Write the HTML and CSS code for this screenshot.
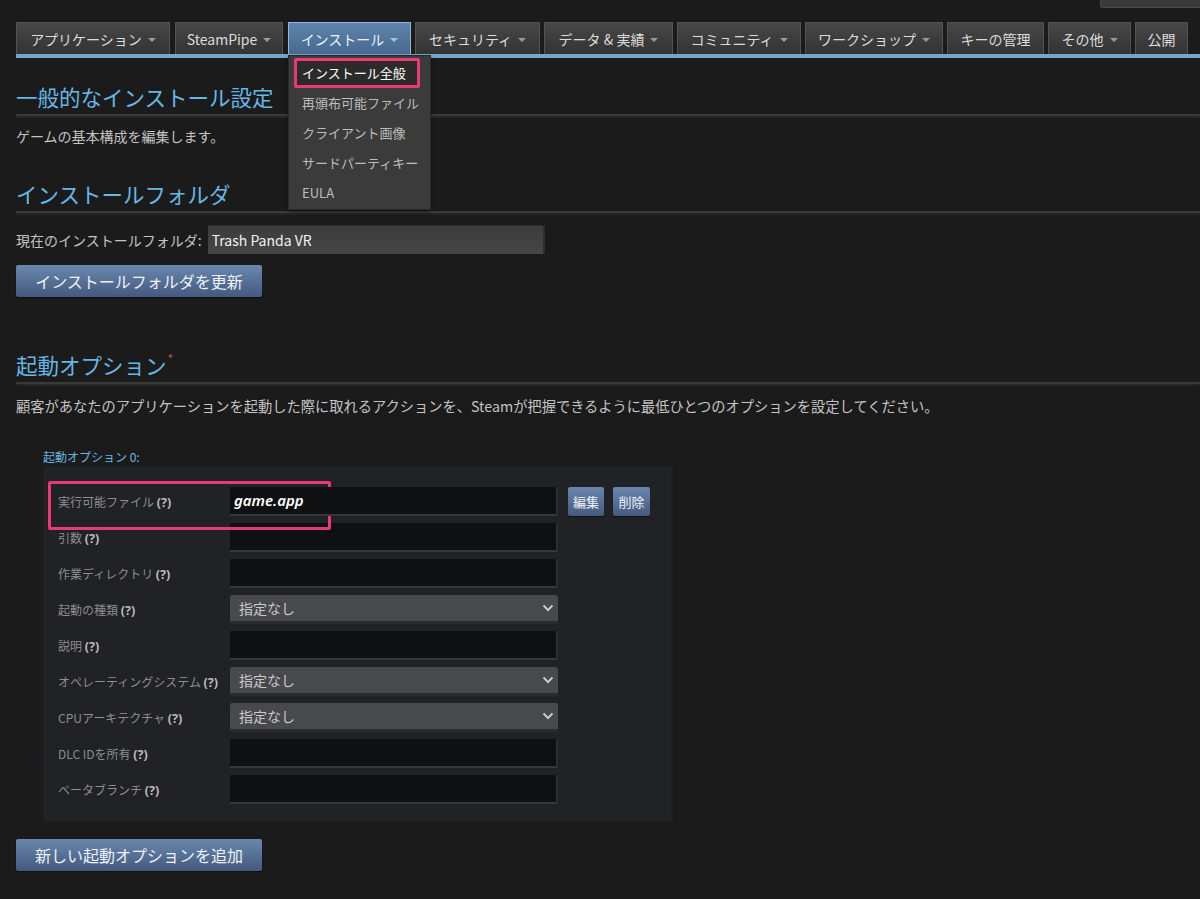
FILE: index.html
```html
<!DOCTYPE html>
<html lang="ja">
<head>
<meta charset="utf-8">
<title>インストール全般</title>
<link rel="stylesheet" href="styles.css">
</head>
<body>
<div class="topbar"><div class="topbox"></div></div>
<nav class="nav">
  <div class="tab">アプリケーション<span class="caret"></span></div>
  <div class="tab">SteamPipe<span class="caret"></span></div>
  <div class="tab active">インストール<span class="caret"></span>
    <div class="menu">
      <div class="menu-item current">インストール全般</div>
      <div class="menu-item">再頒布可能ファイル</div>
      <div class="menu-item">クライアント画像</div>
      <div class="menu-item">サードパーティキー</div>
      <div class="menu-item">EULA</div>
    </div>
  </div>
  <div class="tab">セキュリティ<span class="caret"></span></div>
  <div class="tab">データ &amp; 実績<span class="caret"></span></div>
  <div class="tab">コミュニティ<span class="caret"></span></div>
  <div class="tab">ワークショップ<span class="caret"></span></div>
  <div class="tab">キーの管理</div>
  <div class="tab">その他<span class="caret"></span></div>
  <div class="tab">公開</div>
</nav>

<main class="content">
  <h2 class="heading first">一般的なインストール設定</h2>
  <p class="text">ゲームの基本構成を編集します。</p>

  <h2 class="heading second">インストールフォルダ</h2>
  <div class="folder-row">
    <span class="text">現在のインストールフォルダ:</span>
    <div class="folder-input">Trash Panda VR</div>
  </div>
  <div class="btn big">インストールフォルダを更新</div>

  <h2 class="heading launch">起動オプション<sup class="req">*</sup></h2>
  <p class="text desc">顧客があなたのアプリケーションを起動した際に取れるアクションを、Steamが把握できるように最低ひとつのオプションを設定してください。</p>

  <div class="opt-title">起動オプション 0:</div>
  <section class="panel">
    <div class="highlight"></div>
    <div class="row">
      <span class="label">実行可能ファイル <b>(?)</b></span>
      <div class="field exec">game.app</div>
      <div class="btn small">編集</div>
      <div class="btn small">削除</div>
    </div>
    <div class="row"><span class="label">引数 <b>(?)</b></span><div class="field"></div></div>
    <div class="row"><span class="label">作業ディレクトリ <b>(?)</b></span><div class="field"></div></div>
    <div class="row"><span class="label">起動の種類 <b>(?)</b></span>
      <div class="select"><span>指定なし</span><svg width="12" height="8" viewBox="0 0 12 8"><path d="M1.5 1.5 L6 6 L10.5 1.5" fill="none" stroke="#c8c8c8" stroke-width="2"/></svg></div></div>
    <div class="row"><span class="label">説明 <b>(?)</b></span><div class="field"></div></div>
    <div class="row"><span class="label">オペレーティングシステム <b>(?)</b></span>
      <div class="select"><span>指定なし</span><svg width="12" height="8" viewBox="0 0 12 8"><path d="M1.5 1.5 L6 6 L10.5 1.5" fill="none" stroke="#c8c8c8" stroke-width="2"/></svg></div></div>
    <div class="row"><span class="label">CPUアーキテクチャ <b>(?)</b></span>
      <div class="select"><span>指定なし</span><svg width="12" height="8" viewBox="0 0 12 8"><path d="M1.5 1.5 L6 6 L10.5 1.5" fill="none" stroke="#c8c8c8" stroke-width="2"/></svg></div></div>
    <div class="row"><span class="label">DLC IDを所有 <b>(?)</b></span><div class="field"></div></div>
    <div class="row"><span class="label">ベータブランチ <b>(?)</b></span><div class="field"></div></div>
  </section>

  <div class="btn big add">新しい起動オプションを追加</div>
</main>
</body>
</html>
```

FILE: styles.css
```css
* { box-sizing: border-box; }
body {
  margin: 0;
  background: #1b1b1b;
  font-family: "Noto Sans CJK JP", "Noto Sans", sans-serif;
  color: #c6c6c6;
  min-height: 899px;
}
.topbar {
  height: 8px;
  display: flex;
  justify-content: flex-end;
}
.topbox {
  width: 100px;
  height: 8px;
  background: #3a3a3a;
  border-left: 1px solid #4a4a4a;
  border-bottom: 1px solid #4a4a4a;
  border-radius: 0 0 0 3px;
}
.nav {
  margin: 14px 0 0 16px;
  display: flex;
  gap: 4px;
  border-bottom: 4px solid #76a3cf;
}
.tab {
  position: relative;
  flex: none;
  height: 32px;
  display: flex;
  align-items: center;
  justify-content: center;
  font-size: 14px;
  color: #dcdcdc;
  background: linear-gradient(#474747, #333333);
  border: 1px solid #535353;
  border-bottom: none;
  white-space: nowrap;
}
.tab:nth-child(1) { width: 154px; }
.tab:nth-child(2) { width: 108px; margin-left: 1px; }
.tab:nth-child(3) { width: 123px; margin-left: 1px; }
.tab:nth-child(4) { width: 125px; }
.tab:nth-child(5) { width: 129px; }
.tab:nth-child(6) { width: 124px; }
.tab:nth-child(7) { width: 138px; }
.tab:nth-child(8) { width: 97px; }
.tab:nth-child(9) { width: 83px; }
.tab:nth-child(10) { width: 53px; }
.tab.active {
  background: linear-gradient(#5e83aa, #47698f);
  border-color: #90b8de;
  color: #eef3f8;
}
.caret {
  display: inline-block;
  margin-left: 6px;
  margin-top: 2px;
  width: 0;
  height: 0;
  border-left: 4px solid transparent;
  border-right: 4px solid transparent;
  border-top: 4px solid #9a9a9a;
}
.tab.active .caret { border-top-color: #a9c0d8; }
.menu {
  position: absolute;
  top: 32px;
  left: -1px;
  width: 143px;
  background: #3b3b3b;
  border: 1px solid #2a2a2a;
  padding: 2px 0 1px;
  z-index: 10;
  box-shadow: 0 2px 4px rgba(0,0,0,0.4);
}
.menu-item {
  height: 30px;
  line-height: 30px;
  padding-left: 13px;
  font-size: 13px;
  color: #bdbdbd;
}
.menu-item.current {
  margin: 0 10px 0 5px;
  padding-left: 5px;
  border: 3px solid #ea3a74;
  border-radius: 2px;
  background: #2b2b2b;
  color: #ffffff;
  line-height: 24px;
}
.content {
  padding-left: 16px;
}
.heading {
  margin: 0;
  font-size: 21.5px;
  font-weight: 400;
  line-height: 34px;
  color: #66b7e6;
  border-bottom: 2px solid #3a3a3a;
  box-shadow: 0 3px 0 -1px #262626;
}
.heading.first { margin-top: 22px; }
.heading.second { margin-top: 31px; }
.heading.launch { margin-top: 45px; }
.heading + .text { margin-top: 10px; }
.heading.launch + .text { margin-top: 12px; }
.text {
  margin: 0;
  font-size: 14px;
  line-height: 20px;
  color: #c4c4c4;
}
.text.desc { font-size: 14.25px; }
.folder-row {
  margin-top: 12px;
  display: flex;
  align-items: center;
  gap: 6px;
}
.folder-row + .btn { margin-top: 11px; }
.folder-input {
  width: 337px;
  height: 29px;
  padding-left: 4px;
  line-height: 29px;
  font-size: 14px;
  color: #f2f2f2;
  background: linear-gradient(#3c3c3c, #464646);
  border-top: 1px solid #2a2a2a;
  border-right: 2px solid #2e2e2e;
}
.btn {
  display: flex;
  align-items: center;
  justify-content: center;
  color: #eef2f8;
  background: linear-gradient(#6a87ae, #44597d);
  border-radius: 2px;
  box-shadow: 0 1px 1px rgba(0,0,0,0.5);
}
.btn.big {
  width: 246px;
  height: 32px;
  font-size: 16px;
}
.req {
  color: #c94a3b;
  font-size: 12px;
  vertical-align: 10px;
  margin-left: 1px;
}
.opt-title {
  margin: 33px 0 0 27px;
  font-size: 12px;
  line-height: 16px;
  color: #6cb6e2;
}
.panel {
  position: relative;
  margin: 2px 0 0 27px;
  width: 630px;
  height: 354px;
  padding: 20px 0 0 15px;
  background: #202225;
  border-right: 2px solid #1d1f21;
  display: flex;
  flex-direction: column;
  gap: 7px;
}
.highlight {
  position: absolute;
  left: 5px;
  top: 14px;
  width: 283px;
  height: 49px;
  border: 3px solid #ea3a74;
  border-radius: 2px;
  z-index: 2;
  pointer-events: none;
}
.row {
  display: flex;
  align-items: center;
  height: 29px;
}
.label {
  width: 172px;
  flex: none;
  font-size: 12px;
  color: #8e8e8e;
  white-space: nowrap;
}
.label b {
  color: #bcbcbc;
  font-weight: 700;
  font-size: 12.5px;
  font-family: "Noto Sans", sans-serif;
}
.field {
  width: 328px;
  height: 29px;
  background: #0f1012;
  border-right: 2px solid #2c2e31;
  border-bottom: 2px solid #35373a;
}
.field.exec {
  position: relative;
  z-index: 3;
  padding-left: 4px;
  line-height: 27px;
  font-size: 15px;
  font-style: italic;
  font-weight: 600;
  color: #ffffff;
  font-family: "Noto Sans", sans-serif;
}
.select {
  width: 328px;
  height: 29px;
  padding: 0 4px 0 9px;
  display: flex;
  align-items: center;
  justify-content: space-between;
  font-size: 14px;
  color: #c9c9c9;
  background: #48494c;
  border-bottom: 3px solid #2a2b2d;
  border-radius: 2px;
}
.btn.small {
  width: 36px;
  height: 29px;
  margin-left: 10px;
  font-size: 13px;
}
.btn.small + .btn.small { margin-left: 9px; width: 37px; }
.btn.add { margin-top: 18px; }
```
